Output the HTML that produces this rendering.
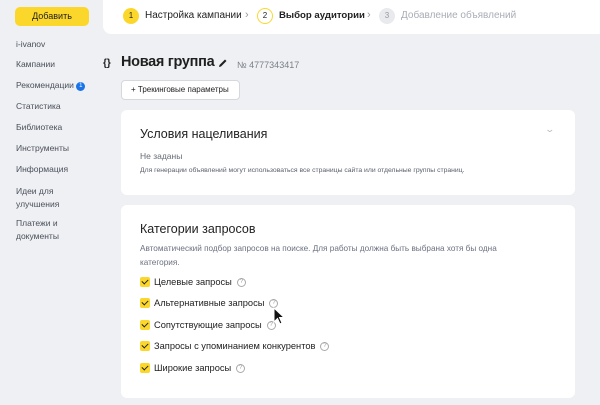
<!DOCTYPE html>
<html><head><meta charset="utf-8"><style>
*{margin:0;padding:0;box-sizing:border-box}
body{width:600px;height:405px;background:#eef0f3;font-family:"Liberation Sans","Noto Sans CJK JP",sans-serif;color:#1f1f1f;position:relative;overflow:hidden}
.abs{position:absolute;white-space:nowrap}
.btn{left:15px;top:7px;width:74px;height:19px;background:#fcd72b;border-radius:5px;font-size:9px;text-align:center;line-height:19px}
.nav{left:16px;font-size:8.5px;color:#4a4f5a}
.top{left:103px;top:0;width:497px;height:34px;background:#fff;border-bottom-left-radius:8px}
.c{border-radius:50%;width:16px;height:16px;font-size:8px;text-align:center;line-height:16px}
.card{background:#fff;border-radius:6px;left:121px;width:454px}
.cb{width:10px;height:10px;background:#fcd72b;border-radius:2px;left:140px}
.cb:after{content:"";position:absolute;left:3px;top:1px;width:3px;height:5px;border:solid #222;border-width:0 1.5px 1.5px 0;transform:rotate(45deg)}
.lbl{left:154px;font-size:9.3px;color:#222;display:flex;align-items:center;height:12px}
.q{display:block;width:9px;height:9px;border:1px solid #aaa;border-radius:50%;font-size:6px;line-height:7px;text-align:center;color:#999;margin-left:5px}
</style></head><body>
<div class="abs btn">Добавить</div>
<div class="abs nav" style="top:39px">i-ivanov</div>
<div class="abs nav" style="top:59px">Кампании</div>
<div class="abs nav" style="top:80px">Рекомендации <span style="display:inline-block;width:9px;height:9px;border-radius:50%;background:#1a73e8;color:#fff;font-size:6px;text-align:center;line-height:9px;vertical-align:1px">1</span></div>
<div class="abs nav" style="top:101px">Статистика</div>
<div class="abs nav" style="top:122px">Библиотека</div>
<div class="abs nav" style="top:143px">Инструменты</div>
<div class="abs nav" style="top:164px">Информация</div>
<div class="abs nav" style="top:185px;line-height:13px">Идеи для<br>улучшения</div>
<div class="abs nav" style="top:217px;line-height:13px">Платежи и<br>документы</div>

<div class="abs top"></div>
<div class="abs c" style="left:123px;top:8px;background:#fcd72b">1</div>
<div class="abs" style="left:145px;top:10px;font-size:10px">Настройка кампании</div>
<div class="abs" style="left:245px;top:9px;font-size:11px;color:#999">›</div>
<div class="abs c" style="left:257px;top:8px;border:1.5px solid #fcd72b;line-height:13px">2</div>
<div class="abs" style="left:279px;top:10px;font-size:9.6px;font-weight:bold">Выбор аудитории</div>
<div class="abs" style="left:367px;top:9px;font-size:11px;color:#999">›</div>
<div class="abs c" style="left:379px;top:8px;background:#e8eaee;color:#999">3</div>
<div class="abs" style="left:401px;top:10px;font-size:10px;color:#a8adb5">Добавление объявлений</div>

<div class="abs" style="left:103px;top:58px;font-size:10px;font-weight:bold">{}</div>
<div class="abs" style="left:121px;top:54px;font-size:14.5px;font-weight:bold;letter-spacing:-0.3px">Новая группа</div>
<svg class="abs" style="left:218px;top:58px" width="10" height="10" viewBox="0 0 10 10"><path d="M1 9 L1.5 7 L7 1.5 L8.5 3 L3 8.5 Z" fill="#222"/></svg>
<div class="abs" style="left:237px;top:60px;font-size:9px;color:#7a7f88">№ 4777343417</div>
<div class="abs" style="left:121px;top:80px;width:119px;height:20px;border:1px solid #d5d8dd;border-radius:4px;background:#fff;font-size:8px;line-height:18px;padding-left:9px">+ Трекинговые параметры</div>

<div class="abs card" style="top:110px;height:85px"></div>
<div class="abs" style="left:140px;top:127px;font-size:12.5px">Условия нацеливания</div>
<div class="abs" style="left:546px;top:124px;font-size:9px;color:#bbb;transform:scaleX(1.4)">⌄</div>
<div class="abs" style="left:140px;top:151px;font-size:8.5px;color:#666c78">Не заданы</div>
<div class="abs" style="left:140px;top:167px;font-size:6.8px;color:#5a5f6a">Для генерации объявлений могут использоваться все страницы сайта или отдельные группы страниц.</div>

<div class="abs card" style="top:205px;height:193px"></div>
<div class="abs" style="left:140px;top:222px;font-size:12.5px">Категории запросов</div>
<div class="abs" style="left:140px;top:242px;font-size:8.2px;color:#6b7080;line-height:14px">Автоматический подбор запросов на поиске. Для работы должна быть выбрана хотя бы одна<br>категория.</div>
<div class="abs cb" style="top:277px"></div><div class="abs lbl" style="top:276px">Целевые запросы<span class="q">?</span></div>
<div class="abs cb" style="top:298px"></div><div class="abs lbl" style="top:297px">Альтернативные запросы<span class="q">?</span></div>
<div class="abs cb" style="top:320px"></div><div class="abs lbl" style="top:319px">Сопутствующие запросы<span class="q">?</span></div>
<div class="abs cb" style="top:341px"></div><div class="abs lbl" style="top:340px">Запросы с упоминанием конкурентов<span class="q">?</span></div>
<div class="abs cb" style="top:363px"></div><div class="abs lbl" style="top:362px">Широкие запросы<span class="q">?</span></div>
<svg class="abs" style="left:273px;top:307px" width="12" height="18" viewBox="0 0 12 18"><path d="M1 1 L1 15 L4.5 11.5 L7 17 L9 16 L6.5 10.5 L11 10.5 Z" fill="#111" stroke="#fff" stroke-width="1"/></svg>
</body></html>
